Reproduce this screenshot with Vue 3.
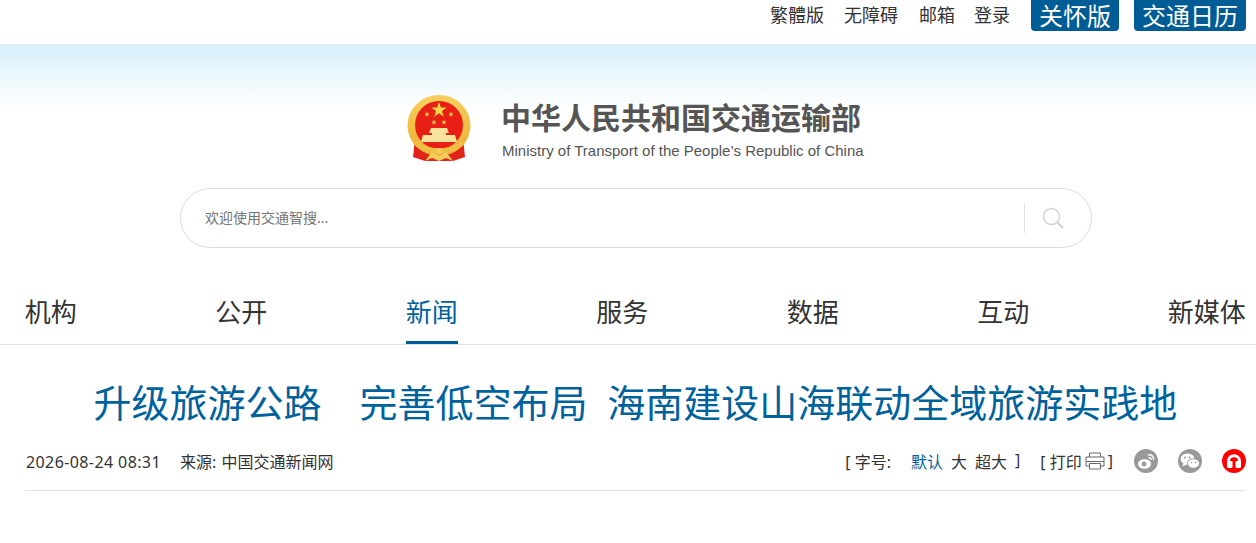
<template>
	<div class="page">
		<div class="topbar">
			<a class="topbar__link" v-for="item in topLinks" :key="item">{{ item }}</a>
			<a class="topbar__btn topbar__btn--first">关怀版</a>
			<a class="topbar__btn">交通日历</a>
		</div>

		<header class="banner">
			<div class="logo">
				<svg class="logo__emblem" viewBox="0 0 64 70" width="64" height="70">
					<defs>
						<linearGradient id="gold" x1="0" y1="0" x2="0" y2="1">
							<stop offset="0" stop-color="#f8cf5c" />
							<stop offset="1" stop-color="#eaae32" />
						</linearGradient>
					</defs>
					<path d="M8 44 L6 62 L18 66 L46 66 L58 62 L56 44 Z" fill="#e2231a" />
					<ellipse cx="32" cy="30.5" rx="31.5" ry="30.5" fill="url(#gold)" />
					<circle cx="32" cy="30" r="24" fill="#e81f14" />
					<polygon points="32,7 33.9,12.6 39.8,12.6 35,16.1 36.8,21.7 32,18.3 27.2,21.7 29,16.1 24.2,12.6 30.1,12.6" fill="#f8d84a" />
					<polygon points="20,16.5 20.7,18.4 22.6,18.4 21.1,19.6 21.6,21.5 20,20.4 18.4,21.5 18.9,19.6 17.4,18.4 19.3,18.4" fill="#f8d84a" />
					<polygon points="44,16.5 44.7,18.4 46.6,18.4 45.1,19.6 45.6,21.5 44,20.4 42.4,21.5 42.9,19.6 41.4,18.4 43.3,18.4" fill="#f8d84a" />
					<polygon points="27,24.5 27.7,26.4 29.6,26.4 28.1,27.6 28.6,29.5 27,28.4 25.4,29.5 25.9,27.6 24.4,26.4 26.3,26.4" fill="#f8d84a" />
					<polygon points="37,24.5 37.7,26.4 39.6,26.4 38.1,27.6 38.6,29.5 37,28.4 35.4,29.5 35.9,27.6 34.4,26.4 36.3,26.4" fill="#f8d84a" />
					<path d="M24 33 H40 L42 38 H39 V40 H48 L50 47 H14 L16 40 H25 V38 H22 Z" fill="#f9e39a" />
					<path d="M10 45 C18 56 46 56 54 45 L57 49 C48 62 16 62 7 49 Z" fill="#f0bd45" />
					<path d="M18 66 L25 57 L32 61 L39 57 L46 66 L39 63 L32 66 L25 63 Z" fill="#f6cd5a" />
					<circle cx="32" cy="56" r="3" fill="#f6cd5a" />
				</svg>
				<div class="logo__text">
					<div class="logo__cn">中华人民共和国交通运输部</div>
					<div class="logo__en">Ministry of Transport of the People’s Republic of China</div>
				</div>
			</div>

			<div class="search">
				<span class="search__hint">欢迎使用交通智搜...</span>
				<span class="search__sep"></span>
				<svg class="search__icon" viewBox="0 0 22 22" width="22" height="22">
					<circle cx="9.5" cy="9.5" r="8" fill="none" stroke="#d4d4d4" stroke-width="1.5" />
					<path d="M15.5 15.5 L21 21" stroke="#d4d4d4" stroke-width="2" />
				</svg>
			</div>
		</header>

		<nav class="nav">
			<a v-for="item in navItems" :key="item" class="nav__item" :class="{ 'nav__item--on': item === '新闻' }">{{ item }}</a>
		</nav>

		<h1 class="title">升级旅游公路　完善低空布局&nbsp;&nbsp;海南建设山海联动全域旅游实践地</h1>

		<div class="meta">
			<div class="meta__left">
				<span class="meta__date">2026-08-24 08:31</span>
				<span class="meta__source">来源: 中国交通新闻网</span>
			</div>
			<div class="meta__right">
				<span class="size">
					<span class="size__label">[ 字号:</span>
					<b class="size__on">默认</b>
					<span>大</span>
					<span>超大</span>
					<span>]</span>
				</span>
				<span class="print">
					[ 打印
					<svg viewBox="0 0 20 18" width="20" height="18">
						<path d="M4.5 5 V1 H15.5 V5 M4.5 14 H1 V5 H19 V14 H15.5 M1 9.5 H19 M4.5 11.5 H15.5 V17 H4.5 Z" fill="none" stroke="#666" stroke-width="1" />
					</svg>
					]
				</span>
				<span class="share share--gray">
					<svg viewBox="0 0 24 24" width="24" height="24">
						<ellipse cx="10.5" cy="15" rx="6.5" ry="4.8" fill="#fff" />
						<circle cx="10" cy="15" r="2.4" fill="#999" />
						<path d="M14 6 C17 5 20 7 19.5 11 M14.5 8.8 C16 8.4 17.4 9.4 17 11" fill="none" stroke="#fff" stroke-width="1.4" />
					</svg>
				</span>
				<span class="share share--gray">
					<svg viewBox="0 0 24 24" width="24" height="24">
						<ellipse cx="9.5" cy="10" rx="7" ry="5.6" fill="#fff" />
						<path d="M5.5 14 L4.5 17.5 L9.5 15 Z" fill="#fff" />
						<ellipse cx="15.5" cy="14.5" rx="6" ry="4.8" fill="#fff" stroke="#999" stroke-width="1" />
						<circle cx="7" cy="8.5" r="1" fill="#999" />
						<circle cx="11.5" cy="8.5" r="1" fill="#999" />
						<circle cx="13.5" cy="13.5" r="0.8" fill="#999" />
						<circle cx="17.5" cy="13.5" r="0.8" fill="#999" />
					</svg>
				</span>
				<span class="share share--red">
					<svg viewBox="0 0 24 24" width="24" height="24">
						<path d="M6.5 15 V12 C6.5 5 17.5 5 17.5 12 V15" fill="none" stroke="#fff" stroke-width="3" />
						<rect x="5" y="12" width="5.5" height="7" rx="1.2" fill="#fff" />
						<rect x="13.5" y="12" width="5.5" height="7" rx="1.2" fill="#fff" />
					</svg>
				</span>
			</div>
		</div>
	</div>
</template>

<script setup>
const topLinks = ["繁體版", "无障碍", "邮箱", "登录"];
const navItems = ["机构", "公开", "新闻", "服务", "数据", "互动", "新媒体"];
</script>

<style scoped>
.page {
	width: 1256px;
	height: 543px;
	overflow: hidden;
	background: #fff;
	font-family: "Noto Sans", "Noto Sans CJK SC", sans-serif;
	color: #333;
}

.topbar {
	display: flex;
	justify-content: flex-end;
	align-items: flex-start;
	height: 44px;
	padding-right: 10px;
	box-sizing: content-box;
	border-bottom: 1px solid #e4e8ea;
}

.topbar__link {
	margin-right: 20px;
	font-size: 18px;
	line-height: 30px;
	color: #333;
}

.topbar__link:nth-child(3) {
	margin-right: 19px;
}

.topbar__link:nth-child(2),
.topbar__link:nth-child(4) {
	margin-right: 21px;
}

.topbar__btn {
	height: 31px;
	margin-left: 15px;
	padding: 0 8px;
	border-radius: 0 0 4px 4px;
	background: #005c94;
	color: #fff;
	font-size: 24px;
	line-height: 31px;
}

.topbar__btn--first {
	margin-left: 0;
}

.banner {
	height: 235px;
	box-sizing: border-box;
	padding-top: 50px;
	background: linear-gradient(#d9f0fb 0, #fff 65px);
}

.logo {
	display: flex;
	align-items: flex-start;
	width: 457px;
	margin-left: 407px;
}

.logo__emblem {
	flex: none;
	margin-right: 31px;
}

.logo__cn {
	margin: 3px 0 0 -1px;
	font-size: 30px;
	line-height: 40px;
	font-weight: 700;
	color: #555;
	white-space: nowrap;
}

.logo__en {
	margin-top: 4px;
	font-family: "Liberation Sans", sans-serif;
	font-size: 15px;
	line-height: 18px;
	color: #555;
	white-space: nowrap;
}

.search {
	display: flex;
	align-items: center;
	width: 912px;
	height: 60px;
	box-sizing: border-box;
	margin: 23px 0 0 180px;
	padding: 0 27px 0 24px;
	background: #fff;
	border: 1px solid #ddd;
	border-radius: 30px;
}

.search__hint {
	flex: 1;
	margin-bottom: 2px;
	font-size: 14px;
	color: #757575;
}

.search__sep {
	width: 1px;
	height: 30px;
	margin-right: 17px;
	background: #e2e2e2;
}

.nav {
	display: flex;
	justify-content: space-between;
	height: 64px;
	padding: 0 10.2px 0 24.8px;
	border-bottom: 1px solid #e1e1e1;
}

.nav__item {
	height: 64px;
	box-sizing: border-box;
	font-size: 26px;
	line-height: 64px;
	color: #333;
}

.nav__item--on {
	color: #00629c;
	border-bottom: 3px solid #005c94;
}

.title {
	margin: 0 10px 0 25px;
	padding-top: 26px;
	height: 87px;
	box-sizing: border-box;
	font-size: 38px;
	line-height: 62px;
	font-weight: 400;
	color: #00629c;
	text-align: center;
	white-space: nowrap;
}

.meta {
	display: flex;
	justify-content: space-between;
	align-items: center;
	height: 58px;
	margin: 0 10px 0 25px;
	border-bottom: 1px solid #e1e1e1;
	font-size: 16px;
	color: #333;
}

.meta__date {
	margin-right: 19px;
	padding-left: 1px;
	letter-spacing: 0.4px;
}

.meta__source {
	word-spacing: 1px;
}

.meta__right {
	display: flex;
	align-items: center;
}

.size {
	display: flex;
	gap: 8px;
	margin-right: 20px;
}

.size__label {
	margin-right: 12px;
}

.size__on {
	font-weight: 400;
	color: #00629c;
}

.print {
	display: flex;
	align-items: center;
	gap: 3px;
	margin-right: 21px;
}

.share {
	display: block;
	width: 24px;
	height: 24px;
	border-radius: 50%;
	margin-left: 20px;
}

.share:nth-child(3) {
	margin-left: 0;
}

.share svg {
	display: block;
}

.share--gray {
	background: #999;
}

.share--red {
	background: #f00;
}
</style>
